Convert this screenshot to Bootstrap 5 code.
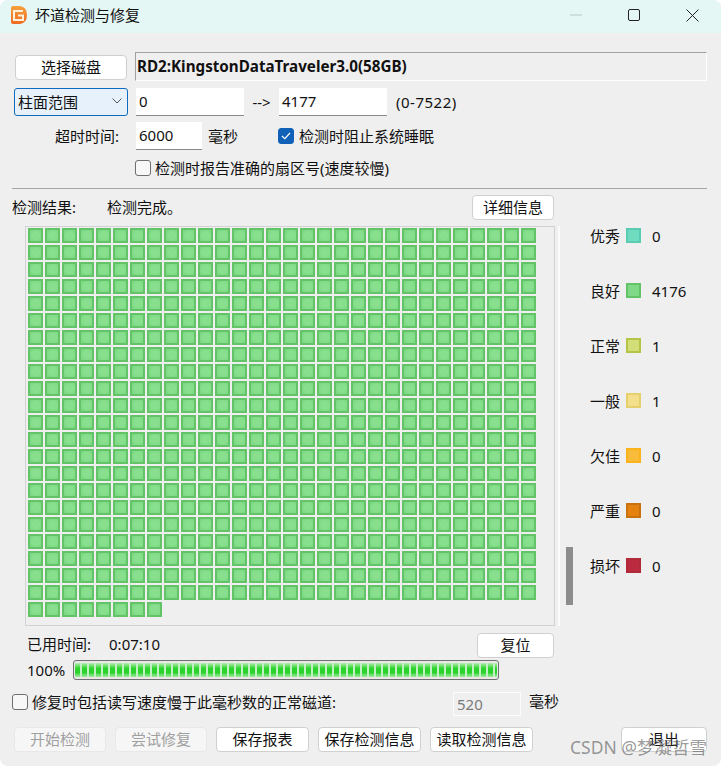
<!DOCTYPE html>
<html lang="zh-CN">
<head>
  <meta charset="UTF-8">
  <title>坏道检测与修复</title>
  <link href="https://cdn.jsdelivr.net/npm/bootstrap@5.3.3/dist/css/bootstrap.min.css" rel="stylesheet">
  <style>
    html, body { height: 100%; background: #fff; }
    body {
      margin: 0;
      overflow: hidden;
      font-family: "Noto Sans", "Noto Sans CJK SC", sans-serif;
      font-size: 15px;
      color: #111;
    }
    .win-frame {
      position: relative;
      width: 721px;
      height: 766px;
      background: #efefef;
      border-radius: 8px;
      overflow: hidden;
    }
    .win-title {
      height: 33px;
      padding: 0 0 3px 10px;
      background: #e4f7f5;
      font-size: 15px;
    }
    .app-logo { margin-right: 7px; }
    .win-ctrl { width: 58px; height: 30px; }
    .win-body { padding: 19px 14px 0 12px; }
    .lbl-text { line-height: 20px; white-space: nowrap; }
    .disk-row { height: 29px; padding-left: 3px; margin-bottom: 7px; gap: 8px; }
    .win-btn {
      height: 25px;
      padding: 0;
      font-size: 15px;
      line-height: 23px;
      color: #111;
      background: #fff;
      border: 1px solid #d0d0d0;
      border-radius: 4px;
    }
    .win-btn:disabled { color: #a0a0a0; background: #f6f6f6; border-color: #e8e8e8; opacity: 1; }
    .btn-pick { width: 112px; margin-top: 3px; }
    .btn-detail { width: 82px; margin-right: 153px; }
    .btn-reset { width: 77px; margin-right: 153px; }
    .btn-w92 { width: 92px; }
    .btn-w93 { width: 93px; }
    .btn-w103 { width: 103px; }
    .btn-exit { width: 86px; }
    .btn-gap { margin-left: 9px; }
    .disk-name {
      flex: 1;
      height: 29px;
      padding-left: 1px;
      line-height: 27px;
      font-weight: 700;
      font-size: 15.2px;
      border: 1px solid;
      border-color: #a0a0a0 #fff #fff #a0a0a0;
    }
    .range-row { height: 28px; margin-bottom: 6px; padding-left: 2px; }
    .fake-select {
      width: 114px;
      height: 28px;
      padding-left: 3px;
      background: #e6f1fb;
      border: 1px solid #0f6cbd;
      border-radius: 3px;
      line-height: 26px;
    }
    .fake-input {
      height: 28px;
      padding-left: 3px;
      line-height: 26px;
      background: #fff;
      border: 0;
      border-bottom: 1px solid #8a8a8a;
    }
    .in-from, .in-to { width: 108px; }
    .in-short { width: 66px; margin-left: 17px; }
    .in-off {
      width: 68px;
      height: 24px;
      margin-left: 117px;
      padding-left: 3px;
      line-height: 22px;
      color: #7a7a7a;
      background: #efefef;
      border: 1px solid #fbfbfb;
    }
    .arrow-text { width: 35px; text-align: center; }
    .range-note { margin-left: 9px; letter-spacing: .5px; }
    .unit-text { margin-left: 6px; }
    .fake-check {
      flex: none;
      width: 16px;
      height: 16px;
      background: #f7f7f7;
      border: 1px solid #6e6e6e;
      border-radius: 3px;
    }
    .fake-check.is-on { background: #0f62b8; border-color: #0f62b8; margin-left: 40px; }
    .sleep-text { margin-left: 5px; }
    .time-label { width: 105px; text-align: right; }
    .sector-row { height: 24px; margin-bottom: 8px; padding-left: 123px; }
    .divider { height: 1px; background: #a5a5a5; }
    .result-row { height: 24px; margin-top: 6px; }
    .done-text { margin-left: 31px; }
    .pane-wrap { margin-top: 7px; height: 400px; }
    .disk-pane {
      width: 530px;
      height: 400px;
      margin-left: 13px;
      padding: 1px 2px;
      border: 1px solid #d2d2d2;
      display: grid;
      grid-template-columns: repeat(30, 15px);
      grid-auto-rows: 15px;
      gap: 2px;
      align-content: start;
    }
    .blk {
      border: 2px solid #62c367;
      background: radial-gradient(circle at 55% 50%, #88e08f 0 45%, #78d37f 100%);
    }
    .pane-edge { width: 2px; height: 400px; margin-left: 3px; background: #fbfbfb; }
    .scroll-slot { width: 7px; margin-left: 6px; height: 400px; display: flex; align-items: flex-end; padding-bottom: 21px; }
    .scroll-thumb { width: 7px; height: 58px; background: #8c8c8c; }
    .legend-col { margin-left: 17px; }
    .legend-row { height: 55px; gap: 6px; }
    .legend-swatch { width: 15px; height: 15px; border: 2px solid; flex: none; margin-top: 2px; }
    .legend-name { width: 30px; line-height: 20px; white-space: nowrap; }
    .legend-num { margin-left: 5px; line-height: 20px; }
    .c-excel { background: #6fdcc0; border-color: #5accb3; }
    .c-good { background: #80d987; border-color: #62c367; }
    .c-norm { background: #d2de78; border-color: #b5c445; }
    .c-fair { background: #f4e08c; border-color: #e6cf6d; }
    .c-poor { background: #f9bb3a; border-color: #fbb31b; }
    .c-bad { background: #e4810f; border-color: #c8720f; }
    .c-dead { background: #bc2a40; border-color: #b12a3a; }
    .time-row { height: 24px; margin-top: 7px; padding-left: 15px; }
    .time-row .lbl-text { margin-bottom: 2px; }
    .clock-text { margin-left: 18px; }
    .progress-row { height: 20px; margin-top: 3px; padding-left: 15px; }
    .pct-text { width: 39px; }
    .pg-track {
      width: 426px;
      height: 20px;
      margin-left: 7px;
      padding: 2px 1px;
      background: #e8e8e8;
      border: 1px solid #707070;
      border-radius: 3px;
    }
    .pg-fill {
      height: 100%;
      background:
        repeating-linear-gradient(90deg, transparent 0 5px, #c4eec4 5px 7px),
        linear-gradient(180deg, #b4edb4 0%, #2ad42c 38%, #2ad42c 68%, #a4e9a4 100%);
    }
    .repair-row { height: 24px; margin-top: 12px; }
    .repair-check { margin-bottom: 4px; }
    .repair-unit { margin-bottom: 6px; }
    .btn-row { height: 25px; margin-top: 11px; padding-left: 2px; }
    .csdn-mark {
      position: absolute;
      left: 570px;
      top: 737px;
      font-size: 17.5px;
      line-height: 20px;
      color: rgba(90, 90, 90, .62);
      white-space: nowrap;
    }
  </style>
</head>
<body>
<div class="win-frame">
  <!-- title bar -->
  <div class="win-title d-flex align-items-center">
    <svg class="app-logo" width="18" height="20" viewBox="0 0 18 20">
      <defs>
        <linearGradient id="logoGrad" x1="0" y1="0" x2="0" y2="1">
          <stop offset="0" stop-color="#f7a13c"/>
          <stop offset="1" stop-color="#ee6a22"/>
        </linearGradient>
      </defs>
      <path d="M1 3Q1 1 3 1H10Q17 2 17 10Q17 18 10 19H3Q1 19 1 17Z" fill="url(#logoGrad)"/>
      <path d="M13 6H4V15H13V10.500H8" fill="none" stroke="#fdf0dc" stroke-width="2"/>
    </svg>
    <span>坏道检测与修复</span>
    <div class="ms-auto d-flex">
      <div class="win-ctrl d-flex align-items-center justify-content-center">
        <svg width="12" height="2" viewBox="0 0 12 2"><path d="M0 1H12" stroke="#b9c6c5"/></svg>
      </div>
      <div class="win-ctrl d-flex align-items-center justify-content-center">
        <svg width="12" height="12" viewBox="0 0 12 12"><rect x=".5" y=".5" width="11" height="11" rx="1.5" fill="none" stroke="#222"/></svg>
      </div>
      <div class="win-ctrl d-flex align-items-center justify-content-center">
        <svg width="13" height="13" viewBox="0 0 13 13"><path d="M.5 .5L12.500 12.500M12.500 .5L.5 12.500" stroke="#222"/></svg>
      </div>
    </div>
  </div>

  <div class="win-body">
    <div class="disk-row d-flex">
      <button class="win-btn btn-pick" type="button">选择磁盘</button>
      <div class="disk-name">RD2:KingstonDataTraveler3.0(58GB)</div>
    </div>

    <div class="range-row d-flex align-items-center">
      <div class="fake-select d-flex justify-content-between">
        <span>柱面范围</span>
        <svg class="me-1 mt-2" width="12" height="8" viewBox="0 0 12 8"><path d="M1.500 1.500L6 6L10.500 1.500" fill="none" stroke="#555"/></svg>
      </div>
      <div class="fake-input in-from ms-2">0</div>
      <span class="arrow-text">--&gt;</span>
      <div class="fake-input in-to">4177</div>
      <span class="lbl-text range-note">(0-7522)</span>
    </div>

    <div class="range-row d-flex align-items-center">
      <span class="lbl-text time-label">超时时间:</span>
      <div class="fake-input in-short">6000</div>
      <span class="lbl-text unit-text">毫秒</span>
      <span class="fake-check is-on d-flex align-items-center justify-content-center">
        <svg width="10" height="8" viewBox="0 0 10 8"><path d="M1 4L3.800 6.600L9 1" fill="none" stroke="#fff" stroke-width="1.200"/></svg>
      </span>
      <span class="lbl-text sleep-text">检测时阻止系统睡眠</span>
    </div>

    <div class="sector-row d-flex align-items-center">
      <span class="fake-check"></span>
      <span class="lbl-text ms-1">检测时报告准确的扇区号(速度较慢)</span>
    </div>

    <div class="divider"></div>

    <div class="result-row d-flex align-items-center">
      <span class="lbl-text">检测结果:</span>
      <span class="lbl-text done-text">检测完成。</span>
      <button class="win-btn btn-detail ms-auto" type="button">详细信息</button>
    </div>

    <div class="pane-wrap d-flex">
      <div class="disk-pane" id="diskPane"></div>
      <div class="pane-edge"></div>
      <div class="scroll-slot"><div class="scroll-thumb"></div></div>
      <div class="legend-col">
        <div class="legend-row d-flex align-items-start"><span class="legend-name">优秀</span><span class="legend-swatch c-excel"></span><span class="legend-num">0</span></div>
        <div class="legend-row d-flex align-items-start"><span class="legend-name">良好</span><span class="legend-swatch c-good"></span><span class="legend-num">4176</span></div>
        <div class="legend-row d-flex align-items-start"><span class="legend-name">正常</span><span class="legend-swatch c-norm"></span><span class="legend-num">1</span></div>
        <div class="legend-row d-flex align-items-start"><span class="legend-name">一般</span><span class="legend-swatch c-fair"></span><span class="legend-num">1</span></div>
        <div class="legend-row d-flex align-items-start"><span class="legend-name">欠佳</span><span class="legend-swatch c-poor"></span><span class="legend-num">0</span></div>
        <div class="legend-row d-flex align-items-start"><span class="legend-name">严重</span><span class="legend-swatch c-bad"></span><span class="legend-num">0</span></div>
        <div class="legend-row d-flex align-items-start"><span class="legend-name">损坏</span><span class="legend-swatch c-dead"></span><span class="legend-num">0</span></div>
      </div>
    </div>

    <div class="time-row d-flex align-items-center">
      <span class="lbl-text">已用时间:</span>
      <span class="lbl-text clock-text">0:07:10</span>
      <button class="win-btn btn-reset ms-auto" type="button">复位</button>
    </div>

    <div class="progress-row d-flex align-items-center">
      <span class="lbl-text pct-text">100%</span>
      <div class="pg-track"><div class="pg-fill"></div></div>
    </div>

    <div class="repair-row d-flex align-items-center">
      <span class="fake-check repair-check"></span>
      <span class="lbl-text ms-1 repair-check">修复时包括读写速度慢于此毫秒数的正常磁道:</span>
      <div class="in-off">520</div>
      <span class="lbl-text ms-2 repair-unit">毫秒</span>
    </div>

    <div class="btn-row d-flex">
      <button class="win-btn btn-w92" type="button" disabled>开始检测</button>
      <button class="win-btn btn-w92 btn-gap" type="button" disabled>尝试修复</button>
      <button class="win-btn btn-w93 btn-gap" type="button">保存报表</button>
      <button class="win-btn btn-w103 btn-gap" type="button">保存检测信息</button>
      <button class="win-btn btn-w103 btn-gap" type="button">读取检测信息</button>
      <button class="win-btn btn-exit ms-auto" type="button">退出</button>
    </div>
  </div>

  <span class="csdn-mark">CSDN @梦凝哲雪</span>
</div>

<script src="https://cdn.jsdelivr.net/npm/bootstrap@5.3.3/dist/js/bootstrap.bundle.min.js"></script>
<script>
  // 22 full rows + 8 on the last one
  const pane = document.getElementById("diskPane");
  const total = 30 * 22 + 8;
  for (let i = 0; i < total; i++) {
    const cell = document.createElement("div");
    cell.className = "blk";
    pane.appendChild(cell);
  }
</script>
</body>
</html>
